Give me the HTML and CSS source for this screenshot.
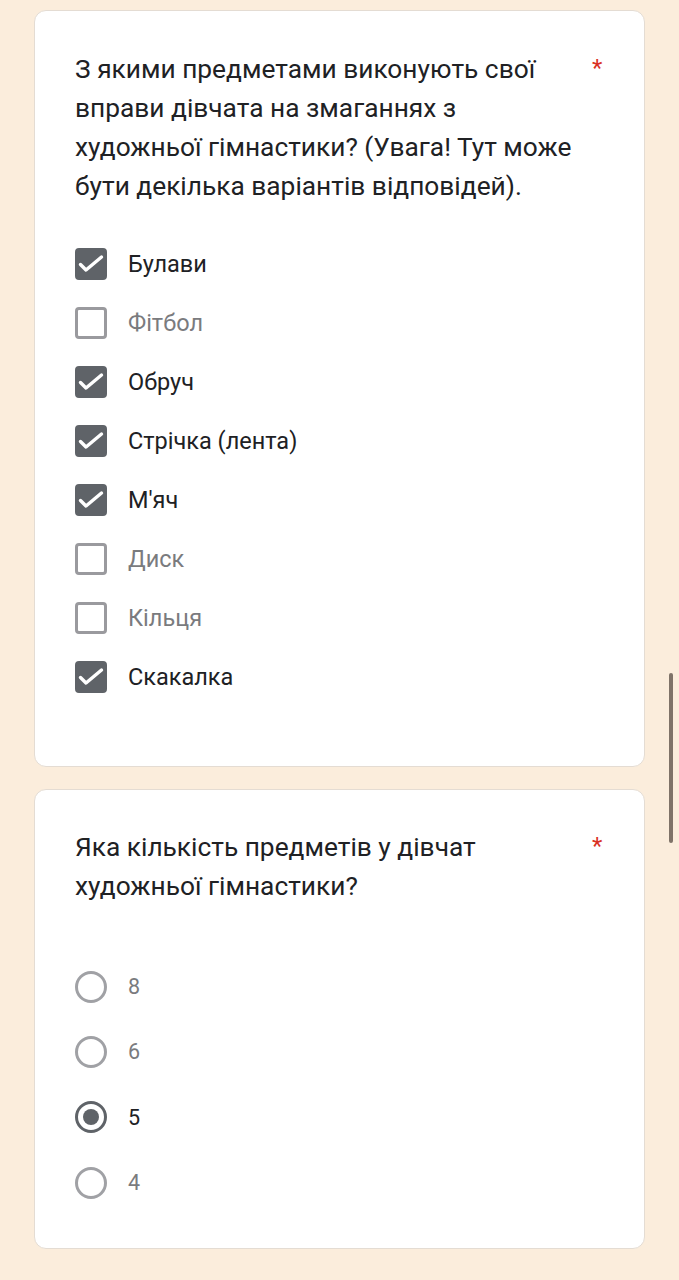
FILE: index.html
```html
<!DOCTYPE html>
<html lang="uk">
<head>
<meta charset="utf-8">
<link rel="stylesheet" href="styles.css">
</head>
<body>
<div class="page">
  <section class="card card-1">
    <div class="q-head">
      <h2 class="q-title">З якими предметами виконують свої вправи дівчата на змаганнях з художньої гімнастики? (Увага! Тут може бути декілька варіантів відповідей).</h2>
      <span class="req">*</span>
    </div>
    <ul class="opts checks">
      <li class="opt on"><span class="cb"><svg viewBox="0 0 32 32"><path d="M5.5 16.5l5.5 5.5 15.5-13" /></svg></span><span class="lbl">Булави</span></li>
      <li class="opt"><span class="cb"></span><span class="lbl">Фітбол</span></li>
      <li class="opt on"><span class="cb"><svg viewBox="0 0 32 32"><path d="M5.5 16.5l5.5 5.5 15.5-13" /></svg></span><span class="lbl">Обруч</span></li>
      <li class="opt on"><span class="cb"><svg viewBox="0 0 32 32"><path d="M5.5 16.5l5.5 5.5 15.5-13" /></svg></span><span class="lbl">Стрічка (лента)</span></li>
      <li class="opt on"><span class="cb"><svg viewBox="0 0 32 32"><path d="M5.5 16.5l5.5 5.5 15.5-13" /></svg></span><span class="lbl">М'яч</span></li>
      <li class="opt"><span class="cb"></span><span class="lbl">Диск</span></li>
      <li class="opt"><span class="cb"></span><span class="lbl">Кільця</span></li>
      <li class="opt on"><span class="cb"><svg viewBox="0 0 32 32"><path d="M5.5 16.5l5.5 5.5 15.5-13" /></svg></span><span class="lbl">Скакалка</span></li>
    </ul>
  </section>
  <section class="card card-2">
    <div class="q-head">
      <h2 class="q-title">Яка кількість предметів у дівчат художньої гімнастики?</h2>
      <span class="req">*</span>
    </div>
    <ul class="opts radios">
      <li class="opt"><span class="rb"></span><span class="lbl">8</span></li>
      <li class="opt"><span class="rb"></span><span class="lbl">6</span></li>
      <li class="opt on"><span class="rb"></span><span class="lbl">5</span></li>
      <li class="opt"><span class="rb"></span><span class="lbl">4</span></li>
    </ul>
  </section>
  <div class="scrollbar"></div>
</div>
</body>
</html>
```
FILE: styles.css
```css
html, body {
  margin: 0;
  padding: 0;
  background: #fbeddc;
}
body {
  font-family: Roboto, "Noto Sans", sans-serif;
  color: #202124;
  width: 679px;
  height: 1280px;
  overflow: hidden;
}
.page {
  padding: 10px 34px 0 34px;
  display: flex;
  flex-direction: column;
  gap: 22px;
}
.card {
  background: #fff;
  border: 1px solid #e4dcd3;
  border-radius: 12px;
  box-sizing: border-box;
  width: 611px;
  padding: 0 38px 0 40px;
}
.card-1 {
  height: 757px;
  padding-top: 39px;
}
.card-2 {
  height: 460px;
  padding-top: 38px;
}
.q-head {
  display: flex;
  align-items: flex-start;
  justify-content: space-between;
}
.q-title {
  margin: 0;
  font-weight: 400;
  font-size: 26.3px;
  line-height: 39px;
  width: 504px;
  letter-spacing: 0;
}
.req {
  color: #d93025;
  font-size: 24px;
  line-height: 36px;
  width: 14px;
}
.opts {
  list-style: none;
  margin: 0;
  padding: 0;
}
.checks {
  margin-top: 28px;
}
.checks .opt {
  display: flex;
  align-items: center;
  height: 59px;
}
.cb {
  width: 32px;
  height: 32px;
  box-sizing: border-box;
  border: 3px solid #9a9a9e;
  border-radius: 4px;
  flex: none;
  display: flex;
  align-items: center;
  justify-content: center;
}
.opt.on .cb {
  background: #5f6368;
  border-color: #5f6368;
}
.cb svg {
  width: 32px;
  height: 32px;
  flex: none;
  fill: none;
  stroke: #fff;
  stroke-width: 3.4;
  stroke-linecap: round;
  stroke-linejoin: round;
}
.lbl {
  margin-left: 21px;
  font-size: 23.5px;
  color: #7a7b7e;
}
.opt.on .lbl {
  color: #202124;
}
.radios {
  margin-top: 48px;
}
.radios .opt {
  display: flex;
  align-items: center;
  height: 65.3px;
}
.rb {
  width: 32px;
  height: 32px;
  box-sizing: border-box;
  border: 3px solid #a0a1a5;
  border-radius: 50%;
  flex: none;
  position: relative;
}
.opt.on .rb {
  border-color: #5f6368;
}
.opt.on .rb::after {
  content: "";
  position: absolute;
  left: 5px;
  top: 5px;
  width: 16px;
  height: 16px;
  border-radius: 50%;
  background: #5f6368;
}
.radios .lbl {
  font-size: 21.5px;
}
.scrollbar {
  position: absolute;
  left: 669px;
  top: 673px;
  width: 4px;
  height: 170px;
  border-radius: 2px;
  background: #7f7368;
}
```
